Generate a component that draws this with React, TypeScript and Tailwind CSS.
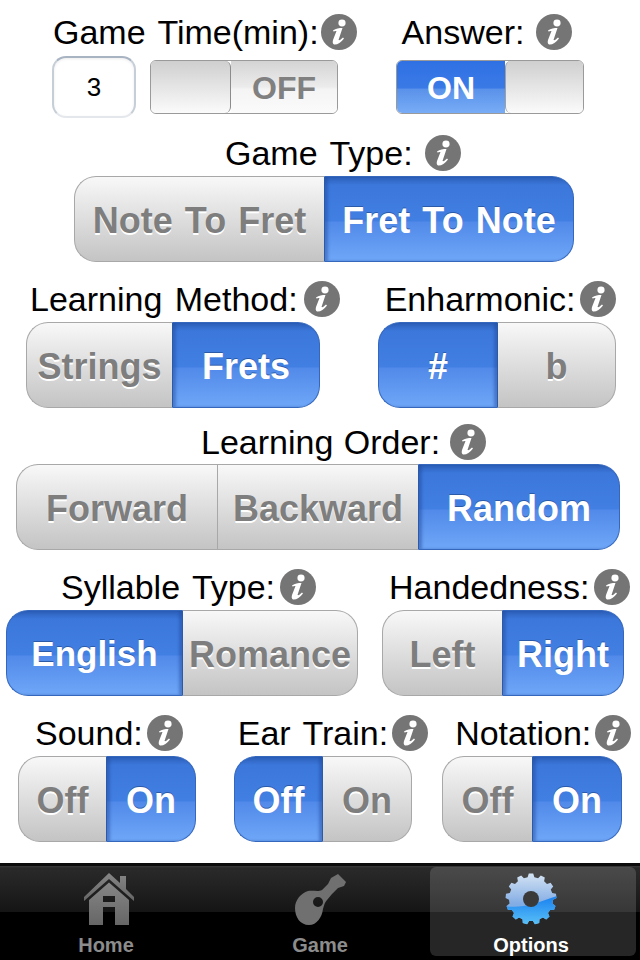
import type { ReactNode } from 'react'

const labelFont = { fontFamily: '"Liberation Sans", Arial, sans-serif' }

type Seg = { text: string; width: number; on?: boolean; small?: boolean }

function InfoIcon() {
  return (
    <svg width="36" height="36" viewBox="0 0 36 36" className="shrink-0">
      <circle cx="18" cy="18" r="18" fill="#757575" />
      <ellipse cx="21" cy="9" rx="3.6" ry="3.4" fill="#fff" />
      <path
        fill="#fff"
        d="M12 16.5 C15 14.5 18 14 21.5 14 L17.5 26 C18.5 26.5 20 25.5 22 23.5 L23 24.5 C20 28.5 16 31 13 30.5 C11.5 30 11.5 28 12 26 L15.5 17 C14.5 16.8 13.5 17 12.5 17.5 Z"
      />
    </svg>
  )
}

function Label({ text, gap = 4, tight }: { text: string; gap?: number; tight?: boolean }) {
  return (
    <div className="flex items-center" style={{ gap }}>
      <span
        className={
          'text-[34px] leading-9 whitespace-nowrap text-black ' + (tight ? '[word-spacing:1px]' : '[word-spacing:3px]')
        }
      >
        {text}
      </span>
      <InfoIcon />
    </div>
  )
}

function Segmented({ items }: { items: Seg[] }) {
  const last = items.length - 1
  return (
    <div className="flex h-[86px]">
      {items.map((s, i) => (
        <div
          key={s.text}
          style={{ width: s.width }}
          className={
            'relative flex h-full items-center justify-center overflow-hidden border-y border-solid pt-[3px] font-bold [word-spacing:2px] ' +
            (s.small ? 'text-[35px] ' : 'text-[36px] ') +
            (i === 0 ? 'rounded-l-[22px] border-l ' : '') +
            (i === last ? 'rounded-r-[22px] border-r ' : '') +
            (s.on
              ? 'border-[#3568bd] bg-[linear-gradient(#2c60ba_0,#3c78dc_10%,#427fe3_52%,#518ae9_54%,#6fa7f8_100%)] text-white [text-shadow:0_-1px_0_#2a5aa8]'
              : 'border-[#a8a8a8] bg-gradient-to-b from-[#f8f8f8] to-[#c4c4c4] text-[#7e7e7e] [text-shadow:0_1.5px_0_#ffffff]') +
            (i > 0 && !s.on && !items[i - 1].on ? ' border-l border-l-[#a8a8a8]' : '') +
            (s.on && i > 0 ? ' border-l border-l-[#2a5aa8] shadow-[inset_3px_0_3px_rgba(30,70,150,0.45)]' : '') +
            (s.on && i < last ? ' border-r border-r-[#2a5aa8] shadow-[inset_-3px_0_3px_rgba(30,70,150,0.45)]' : '')
          }
        >
          <span className="relative">{s.text}</span>
        </div>
      ))}
    </div>
  )
}

function Toggle({ on }: { on: boolean }) {
  return (
    <div className="relative flex h-[54px] w-[188px] overflow-hidden rounded-md border border-[#9a9a9a]">
      {on ? (
        <>
          <div className="flex w-[108px] items-center justify-center bg-[linear-gradient(#2f70e4_0,#3a7ae6_52%,#5a92ea_54%,#78acf6_100%)] pt-0.5 text-[32px] font-bold text-white">
            ON
          </div>
          <div className="flex-1 rounded-l-md border-l border-[#a0a0a0] bg-gradient-to-b from-[#cfcfcf] to-[#fbfbfb]" />
        </>
      ) : (
        <>
          <div className="w-[80px] rounded-r-md border-r border-[#8c8c8c] bg-gradient-to-b from-[#cfcfcf] to-[#fbfbfb]" />
          <div className="flex flex-1 items-center justify-center bg-[linear-gradient(#d4d4d4_0,#ececec_50%,#f4f4f4_54%,#fbfbfb_100%)] pt-0.5 text-[32px] font-bold text-[#808080]">
            OFF
          </div>
        </>
      )}
    </div>
  )
}

function gearPath(cx: number, cy: number, teeth: number, outer: number, inner: number) {
  const pts: string[] = []
  const step = (Math.PI * 2) / teeth
  for (let i = 0; i < teeth; i++) {
    const a = i * step - Math.PI / 2
    const offs = [
      [-0.32, inner],
      [-0.18, outer],
      [0.18, outer],
      [0.32, inner],
    ]
    offs.forEach(([o, r]) => {
      const t = a + o * step
      pts.push(`${(cx + Math.cos(t) * r).toFixed(1)} ${(cy + Math.sin(t) * r).toFixed(1)}`)
    })
  }
  return 'M' + pts.join('L') + 'Z'
}

function HomeIcon() {
  return (
    <svg width="50" height="52" viewBox="0 0 50 52" className="ml-1.5">
      <defs>
        <linearGradient id="tabGrey" x1="0" y1="0" x2="0" y2="1">
          <stop offset="0" stopColor="#868686" />
          <stop offset="1" stopColor="#666666" />
        </linearGradient>
      </defs>
      <path fill="url(#tabGrey)" d="M25 0 L36 10 V3 H42 V16 L50 24 V28 L25 6 L0 28 V24 Z" />
      <path
        fill="url(#tabGrey)"
        fillRule="evenodd"
        d="M25 9.5 L45 27 V52 H5 V27 Z M19 23 V29 H31 V23 Z M19 34 V52 H31 V34 Z"
      />
    </svg>
  )
}

function GuitarIcon() {
  return (
    <svg width="52" height="53" viewBox="0 0 52 53">
      <path
        fill="#707070"
        fillRule="evenodd"
        d="M44 1 L52 9 L50 13 L44 15 L38 21 L33 27 C31 29 30 32 29 36 C28 44 23 52 15 52 C6 52 1 44 1 35 C1 27 7 20 14 18 C19 17 24 19 28 17 L34 11 L37 5 Z M29 29 A5 5 0 1 0 19 29 A5 5 0 1 0 29 29 Z"
      />
    </svg>
  )
}

function GearIcon() {
  const d = gearPath(26, 26, 13, 25.5, 22)
  return (
    <svg width="52" height="52" viewBox="0 0 52 52">
      <defs>
        <linearGradient id="gearTop" x1="0" y1="0" x2="0" y2="0.6">
          <stop offset="0" stopColor="#d4e3f3" />
          <stop offset="1" stopColor="#82ace4" />
        </linearGradient>
        <linearGradient id="gearLow" x1="0" y1="0.5" x2="0" y2="1">
          <stop offset="0" stopColor="#1f86f0" />
          <stop offset="1" stopColor="#58c0f6" />
        </linearGradient>
        <clipPath id="gearLowClip">
          <path d="M0 33 C16 36 32 30 52 23 V52 H0 Z" />
        </clipPath>
      </defs>
      <path d={d} fill="url(#gearTop)" />
      <path d={d} fill="url(#gearLow)" clipPath="url(#gearLowClip)" />
      <circle cx="26" cy="26" r="8" fill="#3a3a3a" />
    </svg>
  )
}

function Tab({ label, active, children, width }: { label: string; active?: boolean; children: ReactNode; width: number }) {
  return (
    <div
      style={{ width }}
      className={
        'relative flex h-[89px] flex-col items-center rounded-md ' +
        (active ? 'bg-white/15 pr-1 text-white' : 'text-[#8c8c8c]')
      }
    >
      <div className="flex h-[64px] shrink-0 items-center justify-center">{children}</div>
      <span className="mt-0.5 shrink-0 text-[20px] leading-6 font-bold">{label}</span>
    </div>
  )
}

export default function App() {
  return (
    <div style={labelFont} className="flex h-[960px] w-[640px] flex-col overflow-hidden bg-white">
      <div className="flex flex-1 flex-col">
        <div className="flex pt-3.5 pl-[53px]">
          <Label text="Game Time(min):" gap={2} />
          <div className="ml-[45px]">
            <Label text="Answer:" gap={12} />
          </div>
        </div>
        <div className="mt-1.5 flex items-center pl-[52px]">
          <div className="flex h-[62px] w-[84px] items-center justify-center rounded-[14px] border-2 border-[#c6ced8] border-t-[#a9b4c2] border-b-[#e4e8ec] bg-white text-[26px] text-black shadow-[inset_0_1px_3px_rgba(0,0,0,0.08)]">
            3
          </div>
          <div className="ml-3.5">
            <Toggle on={false} />
          </div>
          <div className="ml-[58px]">
            <Toggle on />
          </div>
        </div>

        <div className="mt-[17px] flex pl-[225px]">
          <Label text="Game Type:" gap={12} />
        </div>
        <div className="mt-[5px] flex pl-[74px]">
          <Segmented
            items={[
              { text: 'Note To Fret', width: 250 },
              { text: 'Fret To Note', width: 250, on: true },
            ]}
          />
        </div>

        <div className="mt-[19px] flex pl-[30px]">
          <Label text="Learning Method:" gap={6} />
          <div className="ml-[45px]">
            <Label text="Enharmonic:" />
          </div>
        </div>
        <div className="mt-[5px] flex pl-[26px]">
          <Segmented
            items={[
              { text: 'Strings', width: 146 },
              { text: 'Frets', width: 148, on: true },
            ]}
          />
          <div className="ml-[58px]">
            <Segmented
              items={[
                { text: '#', width: 120, on: true },
                { text: 'b', width: 118 },
              ]}
            />
          </div>
        </div>

        <div className="mt-4 flex pl-[201px]">
          <Label text="Learning Order:" gap={10} tight />
        </div>
        <div className="mt-1 flex pl-4">
          <Segmented
            items={[
              { text: 'Forward', width: 201 },
              { text: 'Backward', width: 201 },
              { text: 'Random', width: 202, on: true },
            ]}
          />
        </div>

        <div className="mt-[19px] flex pl-[61px]">
          <Label text="Syllable Type:" gap={5} />
          <div className="ml-[73px]">
            <Label text="Handedness:" gap={5} />
          </div>
        </div>
        <div className="mt-[5px] flex pl-1.5">
          <Segmented
            items={[
              { text: 'English', width: 177, on: true, small: true },
              { text: 'Romance', width: 175 },
            ]}
          />
          <div className="ml-6">
            <Segmented
              items={[
                { text: 'Left', width: 120 },
                { text: 'Right', width: 122, on: true },
              ]}
            />
          </div>
        </div>

        <div className="mt-[19px] flex pl-[35px]">
          <Label text="Sound:" />
          <div className="ml-[55px]">
            <Label text="Ear Train:" />
          </div>
          <div className="ml-[27px]">
            <Label text="Notation:" />
          </div>
        </div>
        <div className="mt-[5px] flex pl-[18px]">
          <Segmented
            items={[
              { text: 'Off', width: 88 },
              { text: 'On', width: 90, on: true },
            ]}
          />
          <div className="ml-[38px]">
            <Segmented
              items={[
                { text: 'Off', width: 89, on: true },
                { text: 'On', width: 89 },
              ]}
            />
          </div>
          <div className="ml-[30px]">
            <Segmented
              items={[
                { text: 'Off', width: 90 },
                { text: 'On', width: 90, on: true },
              ]}
            />
          </div>
        </div>
      </div>

      <div className="flex h-[97px] items-start gap-0.5 border-t-[3px] border-[#0c0c0c] bg-[linear-gradient(#3a3a3a_0,#2a2a2a_2px,#151515_46px,#000000_46px)] pt-[1px]">
        <Tab label="Home" width={212}>
          <HomeIcon />
        </Tab>
        <Tab label="Game" width={212}>
          <GuitarIcon />
        </Tab>
        <div className="ml-0.5">
          <Tab label="Options" active width={206}>
            <GearIcon />
          </Tab>
        </div>
      </div>
    </div>
  )
}
